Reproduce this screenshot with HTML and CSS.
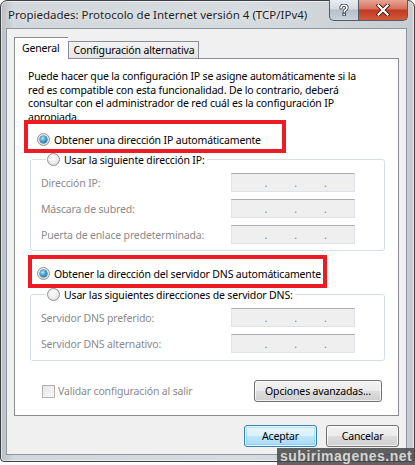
FILE: index.html
```html
<!DOCTYPE html>
<html lang="es">
<head>
<meta charset="utf-8">
<title>Propiedades: Protocolo de Internet versión 4 (TCP/IPv4)</title>
<link rel="stylesheet" href="styles.css">
</head>
<body>
<div class="window">
  <div class="titlebar">
    <div class="title">Propiedades: Protocolo de Internet versión 4 (TCP/IPv4)</div>
    <div class="caption-buttons">
      <div class="cbtn help">
        <svg width="12" height="12" viewBox="0 0 12 12"><path d="M3 4 Q3 1.2 6 1.2 Q9 1.2 9 3.8 Q9 5.3 7.2 6.2 Q6.2 6.7 6.2 8" fill="none" stroke="#39424c" stroke-width="3.2" stroke-linecap="round"/><path d="M3 4 Q3 1.2 6 1.2 Q9 1.2 9 3.8 Q9 5.3 7.2 6.2 Q6.2 6.7 6.2 8" fill="none" stroke="#fff" stroke-width="1.6" stroke-linecap="round"/><rect x="4.9" y="9.2" width="2.6" height="2.6" fill="#fff" stroke="#39424c" stroke-width="0.9"/></svg>
      </div>
      <div class="cbtn close">
        <svg width="14" height="12" viewBox="0 0 14 12"><path d="M2.5 1.5 L11.5 10.5 M11.5 1.5 L2.5 10.5" stroke="#4a1a12" stroke-width="4" stroke-linecap="square"/><path d="M2.5 1.5 L11.5 10.5 M11.5 1.5 L2.5 10.5" stroke="#fff" stroke-width="2.2" stroke-linecap="square"/></svg>
      </div>
    </div>
  </div>
  <div class="client">
    <div class="tabs">
      <div class="tab active">General</div>
      <div class="tab">Configuración alternativa</div>
    </div>
    <div class="panel">
      <p class="desc">Puede hacer que la configuración IP se asigne automáticamente si la<br>red es compatible con esta funcionalidad. De lo contrario, deberá<br>consultar con el administrador de red cuál es la configuración IP<br>apropiada.</p>
      <div class="option first"><span class="radio on"></span><span>Obtener una dirección IP automáticamente</span></div>
      <fieldset class="group g1">
        <legend class="option"><span class="radio"></span><span>Usar la siguiente dirección IP:</span></legend>
        <div class="rows">
          <div class="row"><span class="lbl">Dirección IP:</span><span class="ip"><i></i><b>.</b><i></i><b>.</b><i></i><b>.</b><i></i></span></div>
          <div class="row"><span class="lbl">Máscara de subred:</span><span class="ip"><i></i><b>.</b><i></i><b>.</b><i></i><b>.</b><i></i></span></div>
          <div class="row"><span class="lbl">Puerta de enlace predeterminada:</span><span class="ip"><i></i><b>.</b><i></i><b>.</b><i></i><b>.</b><i></i></span></div>
        </div>
      </fieldset>
      <div class="option second"><span class="radio on"></span><span>Obtener la dirección del servidor DNS automáticamente</span></div>
      <fieldset class="group g2">
        <legend class="option"><span class="radio"></span><span>Usar las siguientes direcciones de servidor DNS:</span></legend>
        <div class="rows">
          <div class="row"><span class="lbl">Servidor DNS preferido:</span><span class="ip"><i></i><b>.</b><i></i><b>.</b><i></i><b>.</b><i></i></span></div>
          <div class="row"><span class="lbl">Servidor DNS alternativo:</span><span class="ip"><i></i><b>.</b><i></i><b>.</b><i></i><b>.</b><i></i></span></div>
        </div>
      </fieldset>
      <div class="bottom-row">
        <div class="check"><span class="box"></span><span>Validar configuración al salir</span></div>
        <div class="btn adv">Opciones avanzadas...</div>
      </div>
      <div class="mark mark1"></div>
      <div class="mark mark2"></div>
    </div>
    <div class="dialog-buttons">
      <div class="btn default">Aceptar</div>
      <div class="btn">Cancelar</div>
    </div>
  </div>
  <div class="watermark">subirimagenes.net</div>
</div>
</body>
</html>
```
FILE: styles.css
```css
* { box-sizing: border-box; }
html, body { margin: 0; padding: 0; background: #ffffff; }
body {
  width: 415px;
  height: 465px;
  overflow: hidden;
  font-family: "Noto Sans", "DejaVu Sans", sans-serif;
  font-size: 10.5px;
  letter-spacing: -0.16px;
  color: #000;
}
.window {
  position: relative;
  width: 415px;
  height: 462px;
  border: 1px solid #3c3f44;
  border-radius: 7px 7px 4px 4px;
  background: linear-gradient(90deg, #b9bec3 0, #d2d7dc 3%, #d6dbe0 60%, #c7ccd1 100%);
  box-shadow: inset 0 0 0 1px rgba(255,255,255,0.55);
  padding: 0 7px 0 5px;
}
.titlebar {
  height: 27px;
  display: flex;
  justify-content: space-between;
  align-items: flex-start;
}
.title {
  padding: 6px 0 0 2px;
  font-size: 11.5px;
  letter-spacing: 0;
  color: #1e1e1e;
  text-shadow: 0 0 6px rgba(255,255,255,0.9);
  white-space: nowrap;
}
.caption-buttons {
  display: flex;
  margin-top: -1px;
  margin-right: -1px;
}
.cbtn {
  height: 21px;
  display: flex;
  align-items: center;
  justify-content: center;
  border: 1px solid #555c66;
  border-top: none;
}
.cbtn.help {
  width: 29px;
  border-radius: 0 0 0 5px;
  border-right: none;
  background: linear-gradient(#e9edf1 0, #d4dae0 45%, #b7c0c9 50%, #c9d1d9 100%);
}
.cbtn.close {
  width: 50px;
  border-radius: 0 0 5px 0;
  background: linear-gradient(#e8a495 0, #d4705c 45%, #c2391f 50%, #cf5a3c 100%);
}
.client {
  width: 401px;
  height: 427px;
  border: 1px solid #8d969f;
  background: #f0f0f0;
  padding: 8px 7px 0 7px;
  display: flex;
  flex-direction: column;
}
.tabs {
  display: flex;
  align-items: flex-end;
  height: 21px;
  position: relative;
  z-index: 1;
}
.tab {
  height: 17px;
  padding: 0 4px 0 5px;
  border: 1px solid #898c95;
  border-bottom: none;
  background: linear-gradient(#f3f3f3, #e4e4e4);
  line-height: 16px;
  color: #000;
}
.tab.active {
  height: 22px;
  margin-bottom: -1px;
  background: #fff;
  padding: 0 8px 0 7px;
  line-height: 20px;
  border-right: none;
}
.panel {
  position: relative;
  height: 358px;
  background: #fff;
  border: 1px solid #898c95;
  padding: 11px 16px 13px 13px;
  display: flex;
  flex-direction: column;
}
.desc {
  margin: 0;
  line-height: 13.5px;
  white-space: nowrap;
}
.option {
  display: flex;
  align-items: center;
  gap: 4px;
  height: 15px;
  white-space: nowrap;
}
.option.first { margin: 8px 0 0 9px; }
.option.second { margin: 15px 0 0 9px; }
.radio {
  width: 13px;
  height: 13px;
  border-radius: 50%;
  border: 1px solid #8f9192;
  background: radial-gradient(circle at 45% 40%, #ffffff 0, #f1f1f1 40%, #d4d4d4 100%);
  display: flex;
  align-items: center;
  justify-content: center;
  flex: none;
}
.radio.on::after {
  content: "";
  width: 7px;
  height: 7px;
  border-radius: 50%;
  background: radial-gradient(circle at 40% 35%, #b7ecff 0, #3fa0d8 45%, #155a8c 100%);
  box-shadow: 0 0 0 0.5px #1d4f76;
}
.group {
  margin: 5px 0 0 2px;
  width: 355px;
  border: 1px solid #d5dfe5;
  border-radius: 3px;
  padding: 6px 0 6px 10px;
  min-inline-size: 0;
}
.group legend {
  padding: 0 2px 0 1px;
  margin-left: 5px;
}
.g2 { margin-top: 6px; padding-bottom: 7px; }
.rows {
  display: flex;
  flex-direction: column;
  gap: 7px;
}
.row {
  display: grid;
  grid-template-columns: 190px 124px;
  align-items: center;
  height: 19px;
}
.lbl { color: #8a8a8a; white-space: nowrap; }
.ip {
  height: 19px;
  display: flex;
  align-items: flex-end;
  padding-left: 5px;
  background: #efefef;
  border: 1px solid #dfe3e8;
  border-top-color: #abadb3;
}
.ip i { width: 28px; }
.ip b {
  width: 2px;
  font-weight: normal;
  color: #7c7ca0;
  line-height: 15px;
  display: flex;
  justify-content: center;
}
.bottom-row {
  margin-top: auto;
  display: flex;
  justify-content: space-between;
  align-items: center;
  padding-left: 14px;
}
.check {
  display: flex;
  align-items: center;
  gap: 3px;
  color: #8a8a8a;
}
.check .box {
  width: 13px;
  height: 13px;
  border: 1px solid #b1b1b1;
  background: linear-gradient(135deg, #e6e6e6, #f8f8f8);
}
.btn {
  height: 22px;
  border: 1px solid #707070;
  border-radius: 3px;
  background: linear-gradient(#f2f2f2 0, #ebebeb 50%, #dddddd 51%, #cfcfcf 100%);
  box-shadow: inset 0 0 0 1px rgba(255,255,255,0.75);
  display: flex;
  align-items: center;
  justify-content: center;
  color: #000;
}
.btn.adv { width: 128px; }
.mark {
  position: absolute;
  border: 4px solid #ed1c24;
}
.mark1 { left: 9px; top: 61px; width: 262px; height: 33px; }
.mark2 { left: 13px; top: 196px; width: 299px; height: 33px; }
.dialog-buttons {
  display: flex;
  justify-content: flex-end;
  gap: 9px;
  margin-top: 9px;
}
.dialog-buttons .btn { width: 73px; }
.btn.default {
  border-color: #3c7fb1;
  background: linear-gradient(#eaf6fd 0, #d9f0fc 50%, #bee6fd 51%, #a7d9f5 100%);
  box-shadow: inset 0 0 0 1px rgba(255,255,255,0.8), inset 0 0 0 2px rgba(72,199,255,0.35);
}
.watermark {
  position: absolute;
  right: -1px;
  bottom: -4px;
  width: 138px;
  height: 17px;
  background: rgba(70,70,70,0.85);
  color: #d4d4d4;
  font-family: "Liberation Sans", Arial, sans-serif;
  font-weight: bold;
  font-size: 14px;
  letter-spacing: 0.5px;
  line-height: 17px;
  padding-left: 3px;
  white-space: nowrap;
  overflow: hidden;
}
```
